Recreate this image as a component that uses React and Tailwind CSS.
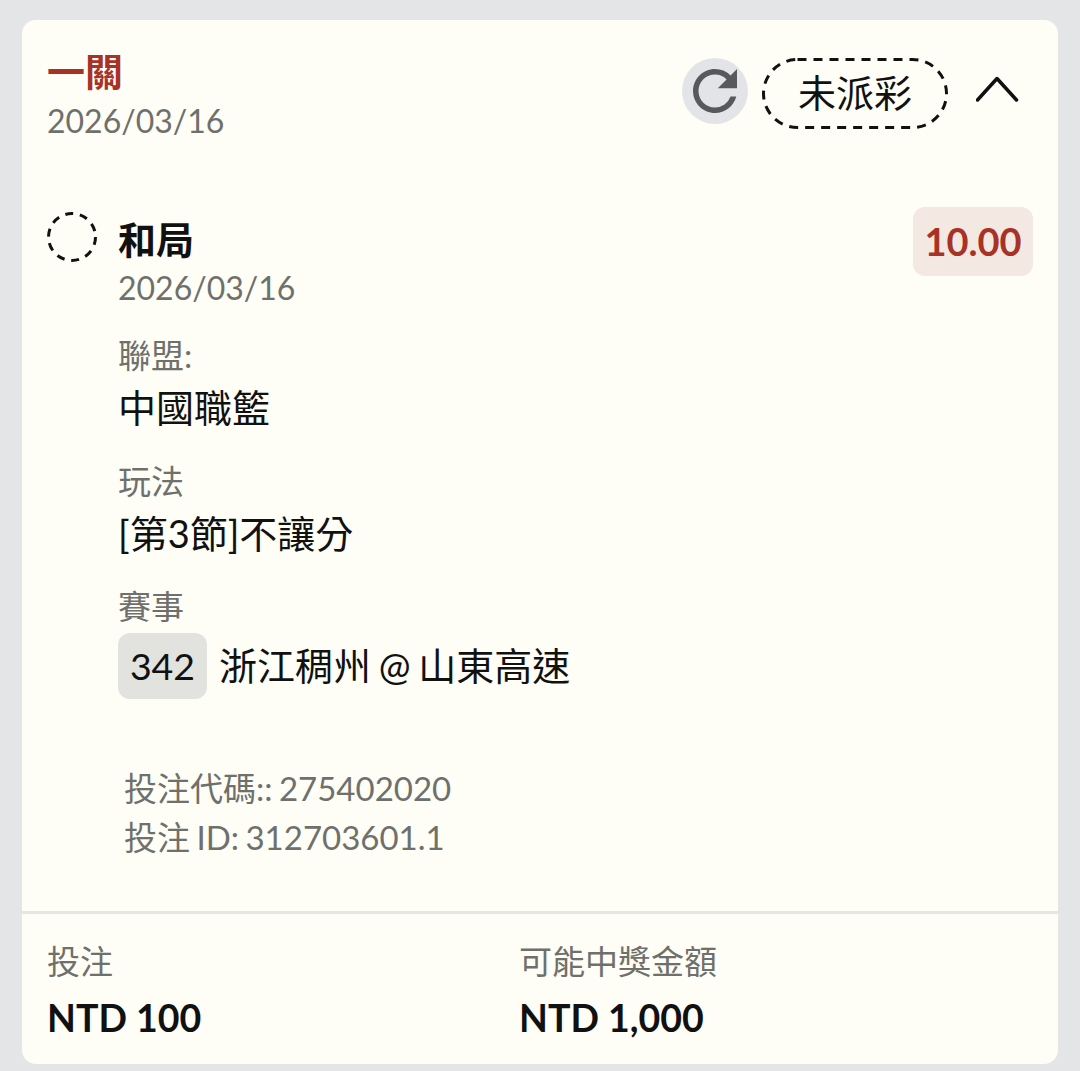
import React from "react";
import { MdRefresh } from "react-icons/md";

const font = "font-['Lato','Noto_Sans_CJK_TC','Noto_Sans',sans-serif]";

function Field({ label, children, className = "" }) {
  return (
    <div className={`flex flex-col ${className}`}>
      <div className="text-[33px] leading-[44px] text-[#6f706b]">{label}</div>
      {children}
    </div>
  );
}

export default function App() {
  return (
    <div className={`${font} min-h-[1071px] bg-[#e4e5e7] px-[22px] pt-[20px] pb-[7px]`}>
      <div className="flex h-[1044px] flex-col overflow-hidden rounded-[14px] bg-[#fefef7]">
        <div className="flex items-start justify-between pl-[25px] pr-[38px] pt-[27px]">
          <div className="flex flex-col">
            <div className="text-[38px] font-bold leading-[48px] text-[#a93226]">一關</div>
            <div className="mt-[3px] text-[32px] leading-[46px] text-[#6f706b]">2026/03/16</div>
          </div>
          <div className="flex items-start pt-[11px]">
            <div className="flex h-[66px] w-[66px] items-center justify-center rounded-full bg-[#e2e4e7] text-[#58595c]">
              <MdRefresh size={68} />
            </div>
            <div className="relative ml-[14px] flex h-[71px] w-[186px] items-center justify-center pb-[2px] text-[38px] text-[#111]">
              <svg width="186" height="71" viewBox="0 0 186 71" fill="none" className="absolute inset-0">
                <rect x="1.5" y="1.5" width="183" height="68" rx="34" stroke="#111" strokeWidth="3" strokeDasharray="9 7" />
              </svg>
              未派彩
            </div>
            <svg width="44" height="26" viewBox="0 0 44 26" className="ml-[28px] mt-[18px]" fill="none">
              <path d="M1.5 24 L21 2.5 L40.5 24" stroke="#111" strokeWidth="3.5" strokeLinecap="round" strokeLinejoin="round" />
            </svg>
          </div>
        </div>

        <div className="mt-[68px] flex items-start pl-[25px] pr-[25px]">
          <svg width="50" height="50" viewBox="0 0 50 50" fill="none" className="shrink-0">
            <circle cx="25" cy="25" r="23.5" stroke="#111" strokeWidth="3" strokeDasharray="8 6.75" />
          </svg>
          <div className="ml-[21px] flex-1 pt-[1px]">
            <div className="text-[38px] font-bold leading-[52px] text-[#111]">和局</div>
            <div className="mt-[1px] text-[32px] leading-[44px] text-[#6f706b]">2026/03/16</div>
            <div className="mt-[23px] flex flex-col">
              <Field label="聯盟:">
                <div className="mt-[2px] text-[38px] leading-[56px] text-[#111]">中國職籃</div>
              </Field>
              <Field label="玩法" className="mt-[24px]">
                <div className="mt-[2px] text-[38px] leading-[56px] text-[#111]">[第3節]不讓分</div>
              </Field>
              <Field label="賽事" className="mt-[23px]">
                <div className="mt-[5px] flex items-center">
                  <div className="flex h-[66px] w-[89px] items-center justify-center rounded-[12px] bg-[#e2e2de] text-[37.5px] text-[#111]">342</div>
                  <div className="ml-[12px] -mt-[2px] text-[38px] leading-[56px] text-[#111] [word-spacing:-2px]">浙江稠州 @ 山東高速</div>
                </div>
              </Field>
            </div>
          </div>
          <div className="-mt-[5px] flex h-[69px] w-[120px] shrink-0 items-center justify-center self-start rounded-[12px] bg-[#f3e8e2] text-[38px] font-bold text-[#a93226]">10.00</div>
        </div>

        <div className="mt-[65px] flex flex-col pl-[102px] text-[33px] leading-[49px] text-[#6f706b] [word-spacing:-2px]">
          <div>投注代碼:: 275402020</div>
          <div>投注 ID: 312703601.1</div>
        </div>

        <div className="mt-[49px] flex flex-1 border-t-[3px] border-[#e6e6e2] pl-[25px] pt-[24px]">
          <div className="w-[472px]">
            <div className="text-[33px] leading-[46px] text-[#6f706b]">投注</div>
            <div className="mt-[8px] text-[37.5px] font-bold leading-[52px] text-[#111]">NTD 100</div>
          </div>
          <div>
            <div className="text-[33px] leading-[46px] text-[#6f706b]">可能中獎金額</div>
            <div className="mt-[8px] text-[37.5px] font-bold leading-[52px] text-[#111]">NTD 1,000</div>
          </div>
        </div>
      </div>
    </div>
  );
}
